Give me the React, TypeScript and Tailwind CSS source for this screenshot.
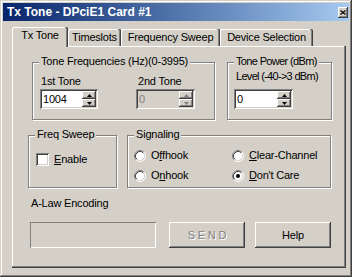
import React from 'react';

const raised = 'shadow-[inset_-1px_-1px_#404040,inset_1px_1px_#ffffff,inset_-2px_-2px_#808080]';
const sunken =
  'shadow-[inset_1px_1px_#808080,inset_-1px_-1px_#ffffff,inset_2px_2px_#404040,inset_-2px_-2px_#d4d0c8]';

function Arrow({ up, disabled }: { up?: boolean; disabled?: boolean }) {
  return (
    <svg width="5" height="3" viewBox="0 0 5 3">
      <path d={up ? 'M0 3L2.5 0L5 3Z' : 'M0 0L2.5 3L5 0Z'} fill={disabled ? '#808080' : '#000'} />
    </svg>
  );
}

function Spin({ value, disabled, className }: { value: string; disabled?: boolean; className: string }) {
  return (
    <div
      className={`flex h-[20px] p-[2px] ${sunken} ${className} ${
        disabled ? 'bg-[#d4d0c8] text-[#808080]' : 'bg-white text-black'
      }`}
    >
      <span className="flex-1 pl-[1px] leading-[16px]">{value}</span>
      <div className="flex w-[14px] flex-col">
        <div className={`flex h-[8px] items-center justify-center bg-[#d4d0c8] ${raised}`}>
          <Arrow up disabled={disabled} />
        </div>
        <div className={`flex h-[8px] items-center justify-center bg-[#d4d0c8] ${raised}`}>
          <Arrow disabled={disabled} />
        </div>
      </div>
    </div>
  );
}

function Group({ label, className, labelClass, children }: { label: string; className: string; labelClass?: string; children: React.ReactNode }) {
  return (
    <div className={`relative border border-[#808080] shadow-[inset_1px_1px_#ffffff,1px_1px_#ffffff] ${className}`}>
      <span className={`absolute -top-[8px] left-[6px] bg-[#d4d0c8] px-[2px] ${labelClass ?? ''}`}>{label}</span>
      {children}
    </div>
  );
}

function Radio({ checked }: { checked?: boolean }) {
  return (
    <svg width="12" height="12" viewBox="0 0 12 12" className="shrink-0">
      <circle cx="6" cy="6" r="5" fill="#fff" />
      <path d="M2.11 9.89A5.5 5.5 0 0 1 9.89 2.11" fill="none" stroke="#808080" strokeWidth="1" />
      <path d="M9.89 2.11A5.5 5.5 0 0 1 2.11 9.89" fill="none" stroke="#fff" strokeWidth="1" />
      <path d="M2.82 9.18A4.5 4.5 0 0 1 9.18 2.82" fill="none" stroke="#404040" strokeWidth="1" />
      <path d="M9.18 2.82A4.5 4.5 0 0 1 2.82 9.18" fill="none" stroke="#d4d0c8" strokeWidth="1" />
      {checked && <circle cx="6" cy="6" r="2" fill="#000" />}
    </svg>
  );
}

function Option({ children, checked }: { children: React.ReactNode; checked?: boolean }) {
  return (
    <div className="flex h-[13px] items-center gap-[5px]">
      <Radio checked={checked} />
      <span>{children}</span>
    </div>
  );
}

export default function App() {
  return (
    <div
      className="h-[277px] w-[352px] overflow-hidden bg-[#d4d0c8] p-[3px] font-['Liberation_Sans',Arial,sans-serif] text-[11px] leading-[13px] tracking-[-0.2px] text-black shadow-[inset_-1px_-1px_#404040,inset_1px_1px_#d4d0c8,inset_-2px_-2px_#808080,inset_2px_2px_#ffffff]"
    >
      {/* Title bar */}
      <div className="flex h-[18px] items-center justify-between bg-linear-to-r from-[#0a246a] to-[#a6caf0] pl-[4px] pr-[1px]">
        <span className="text-[12px] font-bold tracking-normal text-white">Tx Tone - DPciE1 Card #1</span>
        <div className={`flex h-[11px] w-[10px] items-center justify-center bg-[#d4d0c8] ${raised}`}>
          <svg width="6" height="5" viewBox="0 0 6 5">
            <path d="M0.5 0.5L5.5 4.5M5.5 0.5L0.5 4.5" stroke="#000" strokeWidth="1.2" />
          </svg>
        </div>
      </div>

      {/* Tabs */}
      <div className="ml-[9px] mt-[6px] flex h-[19px] items-end">
        <div className="relative z-10 -mb-px h-[20px] w-[56px] rounded-t-[2px] bg-[#d4d0c8] pt-[2px] text-center shadow-[inset_-1px_0_#404040,inset_-2px_0_#808080,inset_1px_1px_#ffffff]">
          Tx Tone
        </div>
        <div className="h-[17px] w-[53px] rounded-t-[2px] pt-[2px] text-center shadow-[inset_-1px_0_#404040,inset_-2px_0_#808080,inset_1px_1px_#ffffff]">
          Timeslots
        </div>
        <div className="h-[17px] w-[99px] rounded-t-[2px] pt-[2px] text-center shadow-[inset_-1px_0_#404040,inset_-2px_0_#808080,inset_1px_1px_#ffffff]">
          Frequency Sweep
        </div>
        <div className="h-[17px] w-[93px] rounded-t-[2px] pt-[2px] text-center shadow-[inset_-1px_0_#404040,inset_-2px_0_#808080,inset_1px_1px_#ffffff]">
          Device Selection
        </div>
      </div>

      {/* Tab panel */}
      <div className="ml-[9px] h-[222px] w-[334px] pt-[16px] shadow-[inset_-1px_-1px_#404040,inset_-2px_-2px_#808080,inset_1px_1px_#ffffff]">
        <div className="ml-[20px] flex gap-[12px]">
          <Group label="Tone Frequencies (Hz)(0-3995)" className="h-[58px] w-[183px] pl-[7px] pt-[12px]">
            <div className="flex gap-[38px]">
              <div className="flex flex-col gap-[1px]">
                <span className="ml-[1px]">1st Tone</span>
                <Spin value="1004" className="w-[58px]" />
              </div>
              <div className="flex flex-col gap-[1px]">
                <span className="ml-[2px] text-black">2nd Tone</span>
                <Spin value="0" disabled className="w-[59px]" />
              </div>
            </div>
          </Group>
          <Group label="Tone Power (dBm)" labelClass="tracking-[-0.65px]" className="h-[58px] w-[105px] pl-[6px] pt-[7px]">
            <div className="flex flex-col gap-[6px]">
              <span className="ml-[2px] tracking-[-0.7px]">Level (-40-&gt;3 dBm)</span>
              <Spin value="0" className="w-[59px]" />
            </div>
          </Group>
        </div>

        <div className="ml-[16px] mt-[15px] flex gap-[10px]">
          <Group label="Freq Sweep" className="h-[53px] w-[89px] pl-[7px] pt-[17px]">
            <div className="flex items-center gap-[5px]">
              <div className={`h-[13px] w-[13px] bg-white ${sunken}`} />
              <span>
                <span className="underline">E</span>nable
              </span>
            </div>
          </Group>
          <Group label="Signaling" className="h-[53px] w-[204px] pl-[6px] pt-[13px]">
            <div className="grid grid-cols-[98px_1fr] gap-y-[7px]">
              <Option>
                O<span className="underline">f</span>fhook
              </Option>
              <Option>
                <span className="underline">C</span>lear-Channel
              </Option>
              <Option>
                O<span className="underline">n</span>hook
              </Option>
              <Option checked>
                <span className="underline">D</span>on't Care
              </Option>
            </div>
          </Group>
        </div>

        <div className="ml-[19px] mt-[9px]">A-Law Encoding</div>

        <div className="ml-[18px] mt-[12px] flex">
          <div className="h-[26px] w-[126px] shadow-[inset_1px_1px_#808080,inset_-1px_-1px_#ffffff]" />
          <button
            disabled
            className={`ml-[13px] flex h-[26px] w-[76px] items-center justify-center text-[#808080] [text-shadow:1px_1px_#ffffff] ${raised}`}
          >
            S E N D
          </button>
          <button className={`ml-[10px] flex h-[26px] w-[76px] items-center justify-center ${raised}`}>Help</button>
        </div>
      </div>
    </div>
  );
}
